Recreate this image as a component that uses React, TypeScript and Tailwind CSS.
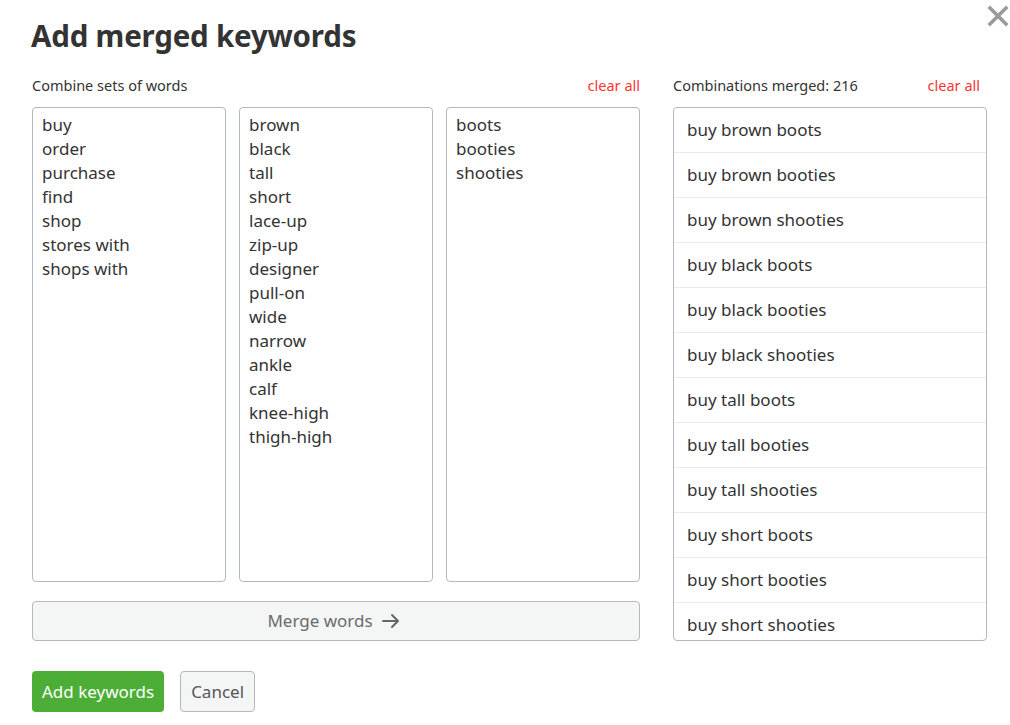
import React from "react";

const col1 = ["buy", "order", "purchase", "find", "shop", "stores with", "shops with"];
const col2 = ["brown", "black", "tall", "short", "lace-up", "zip-up", "designer", "pull-on", "wide", "narrow", "ankle", "calf", "knee-high", "thigh-high"];
const col3 = ["boots", "booties", "shooties"];

const merged: string[] = [];
for (const a of col1) for (const b of col2) for (const c of col3) merged.push(`${a} ${b} ${c}`);

function WordBox({ words }: { words: string[] }) {
  return (
    <div className="h-[475px] rounded border border-[#b4b9bd] bg-white px-[9px] pt-[5px] text-[17px] leading-[24px] text-[#333333]">
      {words.map((w) => (
        <div key={w}>{w}</div>
      ))}
    </div>
  );
}

export default function App() {
  return (
    <div
      className="relative h-[725px] w-[1010px] overflow-hidden bg-white text-[#333333]"
      style={{ fontFamily: '"Noto Sans", "Open Sans", sans-serif' }}
    >
      <button className="absolute right-[0px] top-[4px] flex h-[24px] w-[24px] items-center justify-center">
        <svg width="22" height="22" viewBox="0 0 22 22">
          <path d="M3 3 L19 19 M19 3 L3 19" stroke="#9a9a9a" strokeWidth="3.6" strokeLinecap="square" />
        </svg>
      </button>
      <div className="pl-[31px] pr-[23px] pt-[17px]">
        <h1 className="text-[29.5px] font-bold leading-[38px] tracking-[-0.2px] text-[#333333]">Add merged keywords</h1>
        <div className="mt-[21px] flex gap-[33px]">
          <div className="w-[609px] shrink-0 pl-[1px]">
            <div className="flex h-[20px] items-center justify-between text-[14.5px]">
              <span className="text-[#333333]">Combine sets of words</span>
              <span className="text-[#ff3333]">clear all</span>
            </div>
            <div className="mt-[11px] grid grid-cols-3 gap-[13px]">
              <WordBox words={col1} />
              <WordBox words={col2} />
              <WordBox words={col3} />
            </div>
            <button className="mt-[19px] flex h-[40px] w-full items-center justify-center gap-[8px] rounded border border-[#b4b9bd] bg-[#f4f5f5] pr-[4px] text-[17px] text-[#6b6b6b]">
              <span>Merge words</span>
              <svg width="20" height="16" viewBox="0 0 20 16">
                <path d="M2 8 H17 M11 2 L17 8 L11 14" stroke="#666666" strokeWidth="2" fill="none" strokeLinecap="round" strokeLinejoin="round" />
              </svg>
            </button>
          </div>
          <div className="w-[314px] shrink-0">
            <div className="flex h-[20px] items-center justify-between pr-[7px] text-[14.5px]">
              <span className="text-[#333333]">Combinations merged: 216</span>
              <span className="text-[#ff3333]">clear all</span>
            </div>
            <div className="mt-[11px] h-[534px] overflow-hidden rounded border border-[#b4b9bd] bg-white">
              {merged.slice(0, 12).map((m) => (
                <div key={m} className="flex h-[45px] items-center border-b border-[#e9eaea] px-[13px] text-[17px] text-[#333333]">
                  {m}
                </div>
              ))}
            </div>
          </div>
        </div>
        <div className="mt-[30px] flex gap-[16px] pl-[1px]">
          <button className="h-[41px] rounded bg-[#4cae36] px-[10px] text-[17px] text-white">Add keywords</button>
          <button className="h-[41px] rounded border border-[#b4b9bd] bg-[#f4f5f5] px-[10px] text-[17px] text-[#555555]">Cancel</button>
        </div>
      </div>
    </div>
  );
}
